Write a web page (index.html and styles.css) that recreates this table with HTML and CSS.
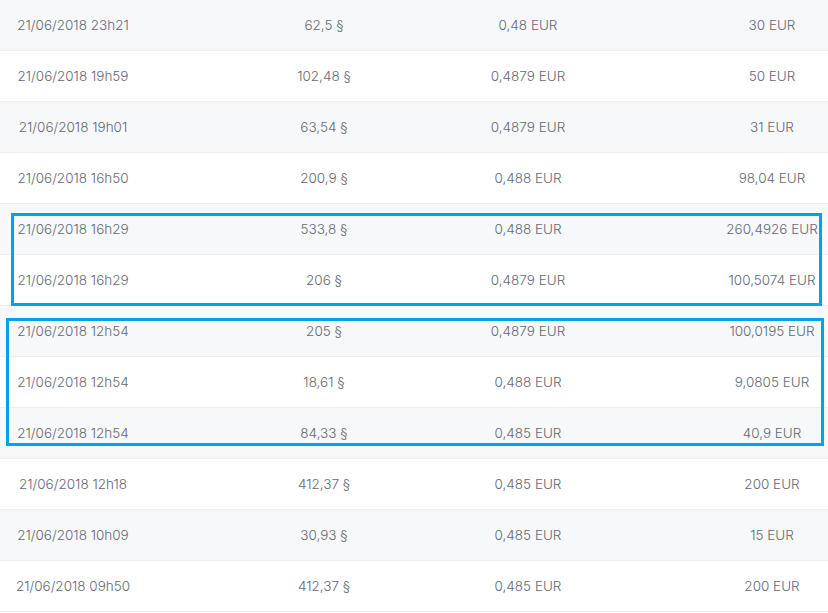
FILE: index.html
```html
<!DOCTYPE html>
<html lang="fr">
<head>
<meta charset="utf-8">
<title>Transactions</title>
<link rel="stylesheet" href="styles.css">
</head>
<body>
<div class="table">
  <div class="row"><span class="c1">21/06/2018 23h21</span><span class="c2">62,5 §</span><span class="c3">0,48 EUR</span><span class="c4">30 EUR</span></div>
  <div class="row"><span class="c1">21/06/2018 19h59</span><span class="c2">102,48 §</span><span class="c3">0,4879 EUR</span><span class="c4">50 EUR</span></div>
  <div class="row"><span class="c1">21/06/2018 19h01</span><span class="c2">63,54 §</span><span class="c3">0,4879 EUR</span><span class="c4">31 EUR</span></div>
  <div class="row"><span class="c1">21/06/2018 16h50</span><span class="c2">200,9 §</span><span class="c3">0,488 EUR</span><span class="c4">98,04 EUR</span></div>
  <div class="row"><span class="c1">21/06/2018 16h29</span><span class="c2">533,8 §</span><span class="c3">0,488 EUR</span><span class="c4">260,4926 EUR</span></div>
  <div class="row"><span class="c1">21/06/2018 16h29</span><span class="c2">206 §</span><span class="c3">0,4879 EUR</span><span class="c4">100,5074 EUR</span></div>
  <div class="row"><span class="c1">21/06/2018 12h54</span><span class="c2">205 §</span><span class="c3">0,4879 EUR</span><span class="c4">100,0195 EUR</span></div>
  <div class="row"><span class="c1">21/06/2018 12h54</span><span class="c2">18,61 §</span><span class="c3">0,488 EUR</span><span class="c4">9,0805 EUR</span></div>
  <div class="row"><span class="c1">21/06/2018 12h54</span><span class="c2">84,33 §</span><span class="c3">0,485 EUR</span><span class="c4">40,9 EUR</span></div>
  <div class="row"><span class="c1">21/06/2018 12h18</span><span class="c2">412,37 §</span><span class="c3">0,485 EUR</span><span class="c4">200 EUR</span></div>
  <div class="row"><span class="c1">21/06/2018 10h09</span><span class="c2">30,93 §</span><span class="c3">0,485 EUR</span><span class="c4">15 EUR</span></div>
  <div class="row"><span class="c1">21/06/2018 09h50</span><span class="c2">412,37 §</span><span class="c3">0,485 EUR</span><span class="c4">200 EUR</span></div>
  <div class="mark mark-a"></div>
  <div class="mark mark-b"></div>
</div>
</body>
</html>
```
FILE: styles.css
```css
html, body {
  margin: 0;
  padding: 0;
  background: #ffffff;
}
body {
  font-family: "Inter", "Noto Sans", sans-serif;
  font-weight: 300;
  font-size: 13.5px;
  color: #646874;
}
.table {
  position: relative;
  width: 828px;
}
.row {
  display: grid;
  grid-template-columns: 200px 220px 200px 208px;
  align-items: center;
  height: 50px;
  border-bottom: 1px solid #eceef1;
  background: #ffffff;
}
.row:nth-child(odd) {
  background: #f7f8fa;
}
.row span {
  text-align: center;
  white-space: nowrap;
}
.c1 { padding-right: 54px; }
.c2 { padding-left: 28px; }
.c3 { padding-left: 16px; }
.c4 { padding-left: 96px; }
.mark {
  position: absolute;
  border: 3px solid #00a3e6;
  box-sizing: border-box;
}
.mark-a {
  left: 11px;
  top: 213px;
  width: 811px;
  height: 93px;
}
.mark-b {
  left: 6px;
  top: 318px;
  width: 818px;
  height: 128px;
}
```
